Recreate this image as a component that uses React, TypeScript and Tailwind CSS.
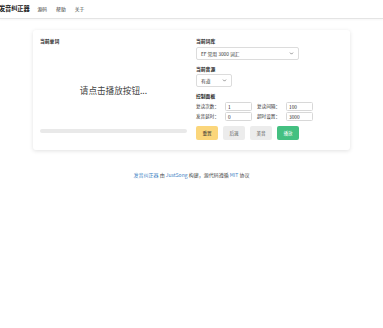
import { ChevronDown } from 'lucide-react';

const font = { fontFamily: '"Noto Sans CJK SC", "Noto Sans", sans-serif' };

function Field({ label, value }: { label: string; value: string }) {
  return (
    <div className="flex items-center">
      <span className="w-[29px] text-[4.6px] text-[#333] whitespace-nowrap">{label}</span>
      <div className="w-[27px] h-[9px] border border-[#d8d8d8] rounded-[1.5px] px-[2px] flex items-center text-[4.8px] text-[#222]">
        {value}
      </div>
    </div>
  );
}

function Select({ text, width }: { text: string; width: string }) {
  return (
    <div className={`${width} h-[13px] border border-[#dcdcdc] rounded-[2px] flex items-center justify-between pl-[4px] pr-[4px] text-[4.8px] text-[#333]`}>
      <span>{text}</span>
      <ChevronDown size={5} strokeWidth={3} className="text-[#555]" />
    </div>
  );
}

export default function App() {
  return (
    <div className="w-[383px] h-[328px] bg-white" style={font}>
      {/* Navbar */}
      <div className="h-[19px] border-b border-[#e4e4e4] flex items-center shadow-[0_1px_2px_rgba(0,0,0,0.04)]">
        <span className="ml-[-1px] text-[6.3px] font-bold text-[#222] tracking-[-0.2px]">发音纠正器</span>
        <span className="ml-[8px] text-[4.8px] text-[#333]">源码</span>
        <span className="ml-[9px] text-[4.8px] text-[#333]">帮助</span>
        <span className="ml-[9px] text-[4.8px] text-[#333]">关于</span>
      </div>

      {/* Card */}
      <div className="ml-[33px] mt-[11px] w-[317px] h-[120px] rounded-[3px] bg-white shadow-[0_1px_4px_rgba(0,0,0,0.12)] flex pl-[7px] pt-[8px] pr-[7px]">
        <div className="w-[147px] flex flex-col">
          <div className="text-[4.8px] font-semibold text-[#222] leading-[5px]">当前单词</div>
          <div className="mt-[42px] text-center text-[8.6px] text-[#444] leading-[10px]">请点击播放按钮...</div>
          <div className="mt-[34px] h-[4px] rounded-full bg-[#e9e9e9]" />
        </div>
        <div className="ml-[9px] flex flex-col">
          <div className="text-[4.8px] font-semibold text-[#222] leading-[5px]">当前词库</div>
          <div className="mt-[4px]"><Select text="EF 常用 3000 词汇" width="w-[103px]" /></div>
          <div className="mt-[6px] text-[4.8px] font-semibold text-[#222] leading-[5px]">当前音源</div>
          <div className="mt-[3px]"><Select text="有道" width="w-[36px]" /></div>
          <div className="mt-[6px] text-[4.8px] font-semibold text-[#222] leading-[5px]">控制面板</div>
          <div className="mt-[4px] flex gap-[5px]">
            <Field label="复读次数：" value="1" />
            <Field label="复读间隔：" value="100" />
          </div>
          <div className="mt-[1px] flex gap-[5px]">
            <Field label="发音延时：" value="0" />
            <Field label="超时设置：" value="3000" />
          </div>
          <div className="mt-[5px] flex gap-[5px] text-[4.6px]">
            <div className="w-[22px] h-[14px] rounded-[2px] bg-[#fbd67b] flex items-center justify-center text-[#333]">重置</div>
            <div className="w-[22px] h-[14px] rounded-[2px] bg-[#ececec] flex items-center justify-center text-[#555]">后退</div>
            <div className="w-[22px] h-[14px] rounded-[2px] bg-[#ececec] flex items-center justify-center text-[#555]">美音</div>
            <div className="w-[22px] h-[14px] rounded-[2px] bg-[#44c081] flex items-center justify-center text-white">播放</div>
          </div>
        </div>
      </div>

      {/* Footer */}
      <div className="mt-[21px] text-center text-[5px] text-[#444]">
        <span className="text-[#4183c4]">发音纠正器</span> 由 <span className="text-[#4183c4]">JustSong</span> 构建，源代码遵循 <span className="text-[#4183c4]">MIT</span> 协议
      </div>
    </div>
  );
}
